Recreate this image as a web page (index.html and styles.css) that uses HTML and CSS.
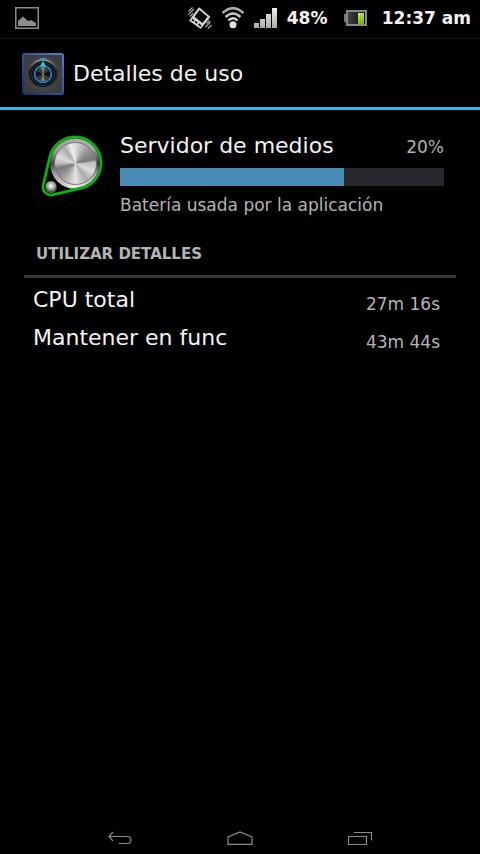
FILE: index.html
```html
<!DOCTYPE html>
<html lang="es">
<head>
<meta charset="utf-8">
<meta name="viewport" content="width=device-width, initial-scale=1">
<title>Detalles de uso</title>
<link rel="stylesheet" href="styles.css">
</head>
<body>
<div class="status">
  <svg class="status-picture" width="24" height="22" viewBox="0 0 24 22"><path d="M.75.75h22.500v20.500H.75z" fill="none" stroke="#8c8c8c" stroke-width="1.500"/><path d="M3 19v-5l5-4.500 5 4.500 3-1 5 3v3z" fill="#8c8c8c"/></svg>
  <div class="status-right">
    <svg width="24" height="22" viewBox="0 0 24 22">
      <path d="M11.500.5L22 9.500Q22.500 10 22 10.500L13 21.500Q12.500 22 12 21.500L1.500 14Q1 13.500 1.500 13L10.500.8Q11 .3 11.500.5z" fill="#d4d4d4"/>
      <path d="M11.500 3L19.500 9.800 14.500 16 6.500 9.800z" fill="#000"/>
      <path d="M4.500 12.800l.8.700M7.800 15l.8.700M11.300 17.500l1 1" stroke="#000" stroke-width="1.600" stroke-linecap="square"/>
      <path d="M.5 4.500l4-4M.5 7.500L6 2M2 9.500l3-3M18.500 16.500l3-3M17.500 20l5-5M20 21.500l3.500-3.500" stroke="#aaa" stroke-width="1.200"/>
    </svg>
    <svg class="wifi" width="24" height="22" viewBox="0 0 24 22">
      <g fill="none" stroke-width="2.400"><path d="M1.500 6Q12-3.500 22.500 6" stroke="#b0b0b0"/><path d="M4.500 10Q12 3 19.500 10" stroke="#c4c4c4"/><path d="M7.500 13.500Q12 9 16.500 13.500" stroke="#d8d8d8"/></g>
      <circle cx="12" cy="17.800" r="3.500" fill="#e0e0e0"/>
    </svg>
    <svg class="signal" width="24" height="20" viewBox="0 0 24 20">
      <defs><linearGradient id="bars" gradientUnits="userSpaceOnUse" x1="0" y1="0" x2="0" y2="20"><stop offset="0" stop-color="#eee"/><stop offset="1" stop-color="#aaa"/></linearGradient></defs>
      <path d="M0 15h5v5H0zM6 11h5v9H6zM12 6h5v14h-5zM18 0h5v20h-5z" fill="url(#bars)"/>
    </svg>
    <span class="level">48%</span>
    <svg class="battery" width="23" height="16" viewBox="0 0 23 16">
      <defs><linearGradient id="cell"><stop offset="0" stop-color="#444"/><stop offset="1" stop-color="#050505"/></linearGradient><linearGradient id="charge" x1="0" y1="0" x2="0" y2="1"><stop offset="0" stop-color="#d0ff50"/><stop offset="1" stop-color="#78b800"/></linearGradient></defs>
      <path d="M0 4h2v8H0z" fill="#777"/><path d="M3 1h19v14H3z" fill="url(#cell)" stroke="#888" stroke-width="2"/><path d="M14 3h6v11h-6z" fill="url(#charge)"/><path d="M16.500 3v11M18.500 3v11" stroke="#70a018" stroke-width=".5"/>
    </svg>
    <time>12:37 am</time>
  </div>
</div>
<header class="header">
  <svg width="42" height="42" viewBox="0 0 42 42">
    <defs>
      <linearGradient id="frame" x1="1" y1="0" x2="0" y2="1"><stop offset="0" stop-color="#4a80d8"/><stop offset="1" stop-color="#12296c"/></linearGradient>
      <radialGradient id="plate"><stop offset="0" stop-color="#666"/><stop offset="1" stop-color="#3c3c3c"/></radialGradient>
      <linearGradient id="dial" x1="0" y1="0" x2="0" y2="1"><stop offset="0" stop-color="#8a8a8a"/><stop offset=".4" stop-color="#1c1e24"/><stop offset="1" stop-color="#3a4350"/></linearGradient>
    </defs>
    <rect width="42" height="42" rx="3" fill="url(#frame)"/><rect x="2" y="2" width="38" height="38" rx="1" fill="url(#plate)"/>
    <circle cx="21" cy="21" r="14" fill="#0d0e12" stroke="url(#dial)" stroke-width="2"/>
    <circle cx="21" cy="21" r="11.500" fill="none" stroke="#30343c"/>
    <circle cx="21" cy="21" r="8.500" fill="#383838" stroke="#2384d8" stroke-width="1.500"/>
    <path d="M21 21l-2.500-7h5zM21 21l-2.500 7h5z" fill="#777"/><path d="M21 21l-7-3v6zM21 21l7-3v6z" fill="#111"/>
    <circle cx="21" cy="21" r="1" fill="#999"/>
    <path d="M18 13.500l3-5.500 3 5.500z" fill="#18d8f0"/><path d="M18 6q3-1 6 0" fill="none" stroke="#0aa" stroke-width="1.500"/>
  </svg>
  <h1>Detalles de uso</h1>
</header>
<main>
  <section class="summary">
    <div class="pulley">
      <span class="wheel"></span><span class="disc"></span><span class="roller"></span>
      <svg width="64" height="64" viewBox="0 0 64 64"><path d="M40.900 54.300A26 26 0 1 0 9.700 23.100L3.200 51.200A8 8 0 0 0 12.800 60.800z" fill="none" stroke="#067006" stroke-width="3"/><path d="M40.900 54.300A26 26 0 1 0 9.700 23.100L3.200 51.200A8 8 0 0 0 12.800 60.800z" fill="none" stroke="#0abb0a" stroke-width="2"/></svg>
    </div>
    <div class="usage">
      <div class="usage-title"><h2>Servidor de medios</h2><span>20%</span></div>
      <div class="bar"><div class="bar-fill"></div></div>
      <p>Batería usada por la aplicación</p>
    </div>
  </section>
  <section class="details">
    <h3>UTILIZAR DETALLES</h3>
    <dl>
      <div><dt>CPU total</dt><dd>27m 16s</dd></div>
      <div><dt>Mantener en func</dt><dd>43m 44s</dd></div>
    </dl>
  </section>
</main>
<nav class="nav">
  <button type="button" aria-label="Atrás"><svg width="24" height="14" viewBox="0 0 24 14"><path d="M5 1L1 5.500 5 10M1 5.500h18q4 0 4 3.500t-4 3.500h-8" fill="none" stroke="#8c8c8c" stroke-width="1.200"/></svg></button>
  <button type="button" aria-label="Inicio"><svg width="26" height="14" viewBox="0 0 26 14"><path d="M1 13.400V6L13 1l12 5v7.400z" fill="none" stroke="#8c8c8c" stroke-width="1.200"/></svg></button>
  <button type="button" aria-label="Recientes"><svg width="24" height="14" viewBox="0 0 24 14"><path d="M.5 5.500h18v8H.5zM6 1.500h17.500v8" fill="none" stroke="#8c8c8c" stroke-width="1.200"/></svg></button>
</nav>
</body>
</html>
```
FILE: styles.css
```css
* { box-sizing: border-box; margin: 0; }
body {
  min-height: 100vh;
  display: flex;
  flex-direction: column;
  background: #000;
  color: #f3f3f3;
  font-family: "DejaVu Sans", sans-serif;
}
svg { display: block; flex: none; }
h1, h2 { font-weight: 400; }
.status {
  display: flex;
  justify-content: space-between;
  align-items: center;
  height: 39px;
  padding: 0 9px 2px 15px;
  border-bottom: 1px solid #151515;
  font-size: 17px;
  font-weight: 700;
  white-space: nowrap;
}
.status-right { display: flex; align-items: center; }
.wifi, .signal, .level, .battery { margin-left: 9px; }
.level { min-width: 48px; }
.status time { margin-left: 15px; }
.header {
  display: flex;
  align-items: center;
  gap: 9px;
  height: 71px;
  padding: 1px 22px 0;
  border-bottom: 3px solid #33b5e5;
}
.header h1 { font-size: 22px; line-height: 24px; }
main { flex: 1; padding: 0 24px; }
.summary { display: flex; gap: 16px; padding: 24px 12px 0 16px; }
.pulley { position: relative; flex: none; width: 64px; height: 64px; }
.pulley svg { position: absolute; inset: 0; }
.wheel, .disc, .roller { position: absolute; border-radius: 50%; }
.wheel {
  left: 10px;
  top: 4px;
  width: 51px;
  height: 51px;
  background: conic-gradient(#aaa, #aaa 50deg, #333 90deg, #aaa 120deg, #eee 180deg, #aaa 240deg, #444 270deg, #999 300deg, #aaa);
}
.disc {
  left: 14px;
  top: 8px;
  width: 43px;
  height: 43px;
  border: 1px solid #777;
  background: conic-gradient(#ddd, #999 40deg, #777 78deg, #bbb 86deg, #ddd 115deg, #aaa 145deg, #e4e4e4 180deg, #999 225deg, #777 255deg, #bbb 270deg, #ddd 290deg, #aaa 325deg, #eee 345deg, #ddd);
}
.roller {
  left: 5px;
  top: 47px;
  width: 12px;
  height: 12px;
  background: radial-gradient(circle at 50% 40%, #fff, #888 50%, #444 60%, #bbb);
}
.usage { flex: 1; min-width: 0; }
.usage-title { display: flex; justify-content: space-between; align-items: baseline; }
.usage-title h2 { font-size: 22px; line-height: 24px; }
.usage-title span { color: #b4b4b4; font-size: 17px; line-height: 20px; }
.bar { height: 18px; margin-top: 10px; background: #29272d; }
.bar-fill { width: 69%; height: 100%; background: #488bb7; }
.usage p { margin-top: 9px; color: #b4b4b4; font-size: 17px; line-height: 20px; }
.details { margin-top: 29px; }
.details h3 {
  padding: 0 12px 11px;
  border-bottom: 3px solid #373737;
  color: #b4b4b4;
  font-size: 15px;
  line-height: 20px;
}
.details dl { padding: 3px 16px 0 9px; }
.details dl div { display: flex; justify-content: space-between; align-items: flex-end; height: 38px; padding-bottom: 5px; }
.details dt { font-size: 22px; line-height: 28px; }
.details dd { color: #b4b4b4; font-size: 17px; line-height: 20px; }
.nav { display: flex; justify-content: center; gap: 72px; height: 32px; }
.nav button {
  display: flex;
  align-items: center;
  justify-content: center;
  width: 48px;
  height: 32px;
  padding: 0;
  border: 0;
  background: none;
}
```
